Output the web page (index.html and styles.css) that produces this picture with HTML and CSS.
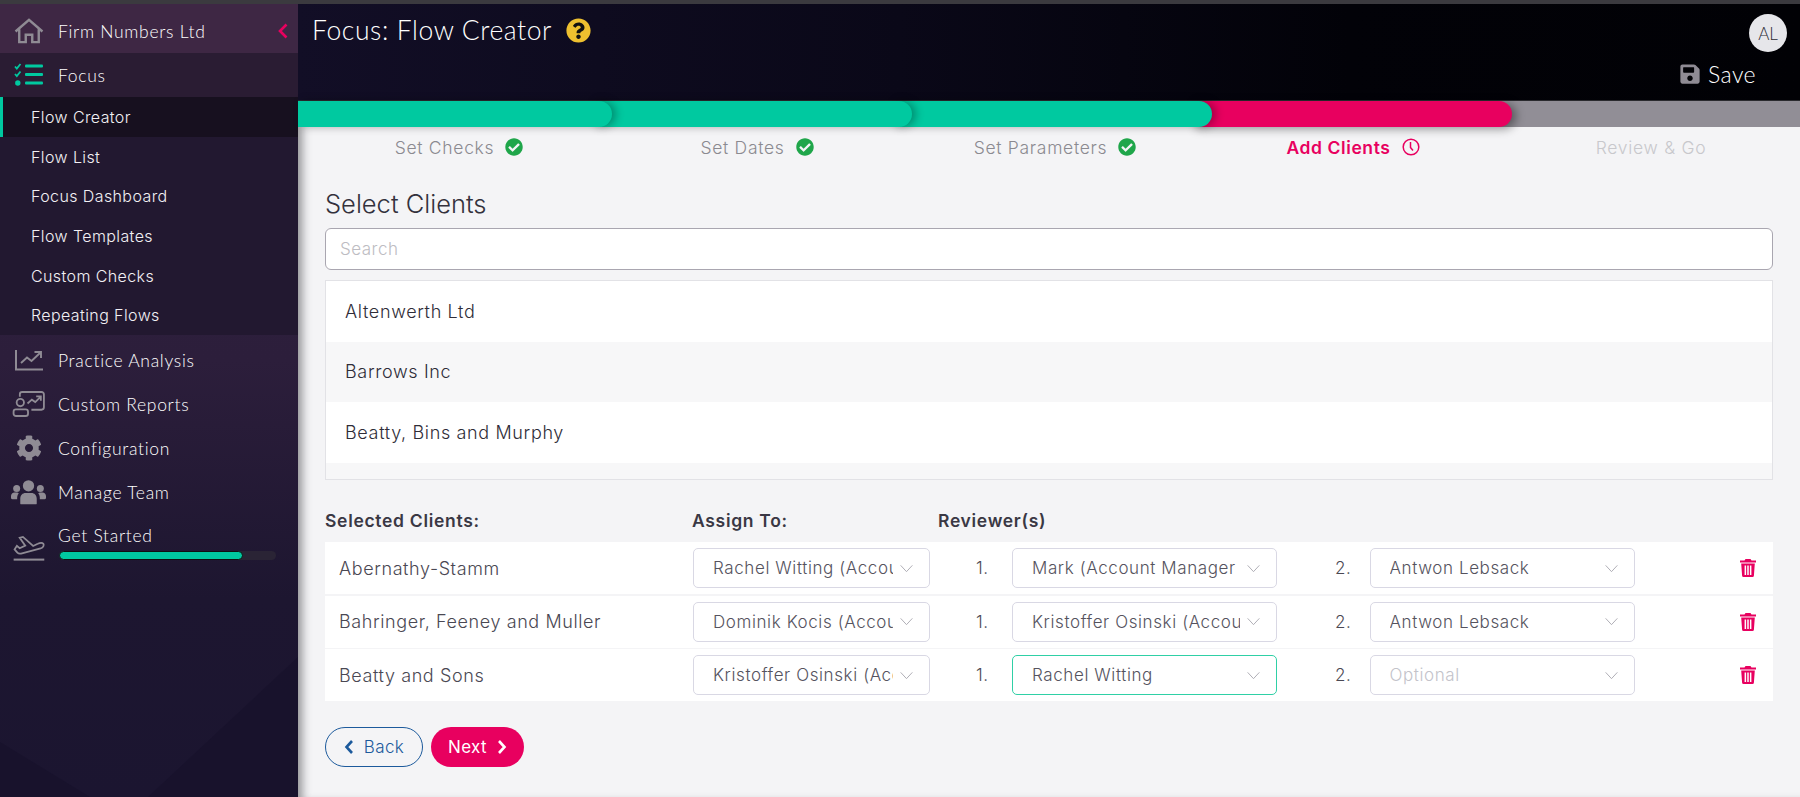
FILE: index.html
```html
<!DOCTYPE html>
<html lang="en">
<head>
    <meta charset="utf-8"/>
    <title>Focus: Flow Creator</title>
    <link rel="stylesheet" href="styles.css">
</head>
<body>
    <svg class="sprite" width="0" height="0">
        <symbol id="i-check" viewBox="0 0 512 512"><path d="M504 256c0 136.967-111.033 248-248 248S8 392.967 8 256 119.033 8 256 8s248 111.033 248 248zM227.314 387.314l184-184c6.248-6.248 6.248-16.379 0-22.627l-22.627-22.627c-6.248-6.249-16.379-6.249-22.628 0L216 308.118l-70.059-70.059c-6.248-6.248-16.379-6.248-22.628 0l-22.627 22.627c-6.248 6.248-6.248 16.379 0 22.627l104 104c6.249 6.249 16.379 6.249 22.628.001z"/></symbol>
        <symbol id="i-chev" viewBox="0 0 16 10"><path d="M1.500 1.500 8 8.500l6.500-7" fill="none" stroke="currentColor" stroke-width="1"/></symbol>
        <symbol id="i-trash" viewBox="0 0 16 18"><path d="M5.500 0h5l1 1.500H16v2H0v-2h4.500zM1.200 4.500h13.600l-.9 12.200a1.400 1.400 0 0 1-1.400 1.300H3.500a1.400 1.400 0 0 1-1.400-1.300zM4.600 6.500v9.500h1.500V6.500zm2.650 0v9.500h1.500V6.500zm2.650 0v9.500h1.500V6.500z" fill-rule="evenodd"/></symbol>
    </svg>

    <div class="topstrip"></div>
    <div class="shell">
        <nav class="sidebar">
            <svg class="side-bg" viewBox="0 0 298 140" preserveAspectRatio="none"><path d="M298 0v140H148zM0 85l90 55H0z" fill="#15102a" opacity=".55"/></svg>

            <div class="firm">
                <svg class="nav-icon" viewBox="0 0 32 28" fill="none" stroke="#8f8b94" stroke-width="2.600"><path d="M1.500 14.500 16 2l14.500 12.500M5.500 12v14h7v-8h7v8h7V12"/></svg>
                <span class="nav-text">Firm Numbers Ltd</span>
                <svg class="collapse" viewBox="0 0 10 16"><path d="M8.500 1.500 2 8l6.500 6.500" fill="none" stroke="#e8005f" stroke-width="2.600"/></svg>
            </div>
            <div class="focus-head">
                <svg class="nav-icon" viewBox="0 0 30 24" fill="#00c9a0"><path d="M1 3.500 2.800 5.500 6.500 1" fill="none" stroke="#00c9a0" stroke-width="1.800"/><path d="M1 11 2.800 13 6.500 8.500" fill="none" stroke="#00c9a0" stroke-width="1.800"/><circle cx="3.800" cy="20" r="2.700"/><rect x="11" y="1.500" width="18" height="3" rx="1"/><rect x="11" y="10" width="18" height="3" rx="1"/><rect x="11" y="18.500" width="18" height="3" rx="1"/></svg>
                <span class="nav-text">Focus</span>
            </div>
            <ul class="submenu">
                <li class="sub-item active">Flow Creator</li>
                <li class="sub-item">Flow List</li>
                <li class="sub-item">Focus Dashboard</li>
                <li class="sub-item">Flow Templates</li>
                <li class="sub-item">Custom Checks</li>
                <li class="sub-item">Repeating Flows</li>
            </ul>
            <div class="nav-row">
                <svg class="nav-icon" viewBox="0 0 30 24" fill="none" stroke="#8f8b94" stroke-width="2"><path d="M2 2v19.500h27"/><path d="M7 15l6-5.500 4.500 3.500L26 5M20.500 4H27v6" stroke-width="1.900"/></svg>
                <span class="nav-text">Practice Analysis</span>
            </div>
            <div class="nav-row">
                <svg class="nav-icon wide" viewBox="0 0 34 27" fill="none" stroke="#8f8b94" stroke-width="1.900"><path d="M8 6V3.500A2.500 2.500 0 0 1 10.500 1H30.500A2.500 2.500 0 0 1 33 3.500V17a2.500 2.500 0 0 1-2.500 2.500H20"/><circle cx="8.500" cy="12" r="3.800"/><rect x="1.500" y="19" width="15" height="7" rx="2.500"/><path d="M16 13l4.500-4 3.500 2.500L29.500 6M25 5.500h4.800v4.500"/></svg>
                <span class="nav-text">Custom Reports</span>
            </div>
            <div class="nav-row">
                <svg class="nav-icon" viewBox="0 0 512 512" fill="#8f8b94"><path d="M487.4 315.7l-42.6-24.6c4.3-23.2 4.3-47 0-70.2l42.6-24.6c4.9-2.8 7.1-8.6 5.500-14-11.100-35.600-30-67.800-54.700-94.600-3.800-4.100-10-5.100-14.800-2.300L380.800 110c-17.900-15.400-38.500-27.300-60.800-35.100V25.800c0-5.600-3.900-10.500-9.400-11.700-36.700-8.200-74.300-7.800-109.200 0-5.500 1.200-9.400 6.100-9.400 11.700V75c-22.200 7.900-42.800 19.800-60.800 35.100L88.700 85.500c-4.900-2.800-11-1.900-14.800 2.300-24.700 26.700-43.600 58.900-54.700 94.600-1.700 5.400.6 11.200 5.500 14L67.300 221c-4.300 23.200-4.300 47 0 70.200l-42.600 24.600c-4.900 2.800-7.100 8.600-5.500 14 11.100 35.600 30 67.800 54.700 94.600 3.800 4.100 10 5.100 14.800 2.300l42.600-24.600c17.900 15.400 38.500 27.300 60.800 35.100v49.200c0 5.600 3.900 10.500 9.400 11.700 36.700 8.200 74.300 7.800 109.200 0 5.500-1.200 9.400-6.100 9.400-11.700v-49.200c22.200-7.900 42.800-19.800 60.800-35.100l42.600 24.600c4.900 2.800 11 1.900 14.800-2.300 24.700-26.700 43.600-58.900 54.700-94.600 1.500-5.500-.7-11.300-5.600-14.100zM256 336c-44.100 0-80-35.900-80-80s35.900-80 80-80 80 35.900 80 80-35.900 80-80 80z"/></svg>
                <span class="nav-text">Configuration</span>
            </div>
            <div class="nav-row">
                <svg class="nav-icon wide" viewBox="0 0 34 24" fill="#8f8b94"><circle cx="17" cy="6" r="5.500"/><circle cx="5.500" cy="8.500" r="3.400"/><circle cx="28.500" cy="8.500" r="3.400"/><path d="M9 23.500v-5c0-3.500 2.500-5.500 5-5.500h6c2.500 0 5 2 5 5.500v5a1 1 0 0 1-1 .5H10a1 1 0 0 1-1-.5zM7.500 13.500C6 15 6 17 6 19H1.500A1.500 1.500 0 0 1 0 17.500V16c0-2 1.500-3.500 3.500-3.500h2c1 0 1.500.4 2 1zM26.500 13.500C28 15 28 17 28 19h4.500a1.500 1.500 0 0 0 1.500-1.500V16c0-2-1.500-3.500-3.500-3.500h-2c-1 0-1.500.4-2 1z"/></svg>
                <span class="nav-text">Manage Team</span>
            </div>
            <div class="nav-row started">
                <svg class="nav-icon wide" viewBox="0 0 34 28" fill="none" stroke="#8f8b94" stroke-width="1.900"><path d="M1 26.500h33" stroke-width="2.200"/><path d="M2 15.500l3 3.500c1 1 2.500 1.400 4 1l21-5.500c3-1 4-3.500 3-5-1-1.300-3.500-1.300-6 0l-5 2.300L11 2 7.500 3l6 8.500-6 2.700-3-2.500z"/></svg>
                <div class="started-body">
                    <span class="nav-text">Get Started</span>
                    <div class="started-track"><div class="started-fill"></div></div>
                </div>
            </div>
        </nav>

        <main class="main">
            <header class="header">
                <div class="title-wrap">
                    <h1 class="title">Focus: Flow Creator</h1>
                    <svg class="help" viewBox="0 0 512 512"><circle cx="256" cy="256" r="160" fill="#111"/><path fill="#eec02f" d="M504 256c0 136.997-111.043 248-248 248S8 392.997 8 256C8 119.083 119.043 8 256 8s248 111.083 248 248zM262.655 90c-54.497 0-89.255 22.957-116.549 63.758-3.536 5.286-2.353 12.415 2.715 16.258l34.699 26.310c5.205 3.947 12.621 3.008 16.665-2.122 17.864-22.658 30.113-35.797 57.303-35.797 20.429 0 45.698 13.148 45.698 32.958 0 14.976-12.363 22.667-32.534 33.976C247.128 238.528 216 254.941 216 296v4c0 6.627 5.373 12 12 12h56c6.627 0 12-5.373 12-12v-1.333c0-28.462 83.186-29.647 83.186-106.667 0-58.002-60.165-102-116.531-102zM256 338c-25.365 0-46 20.635-46 46 0 25.364 20.635 46 46 46s46-20.636 46-46c0-25.365-20.635-46-46-46z"/></svg>
                </div>
                <div class="header-right">
                    <div class="avatar">AL</div>
                    <div class="save">
                        <svg class="save-icon" viewBox="0 0 448 512" fill="#8f8b94"><path d="M433.900 129.900l-83.900-83.900A48 48 0 0 0 316.100 32H48C21.500 32 0 53.500 0 80v352c0 26.500 21.500 48 48 48h352c26.500 0 48-21.500 48-48V163.900a48 48 0 0 0-14.100-34zM224 416c-35.300 0-64-28.700-64-64 0-35.300 28.700-64 64-64s64 28.700 64 64c0 35.300-28.700 64-64 64zm96-304.500V212c0 6.600-5.400 12-12 12H76c-6.600 0-12-5.400-12-12V108c0-6.600 5.400-12 12-12h228.500c3.200 0 6.200 1.300 8.500 3.500l3.500 3.500c2.200 2.200 3.500 5.300 3.500 8.500z"/></svg>
                        <span>Save</span>
                    </div>
                </div>
            </header>

            <div class="progress">
                <div class="seg seg-1"></div>
                <div class="seg seg-2"></div>
                <div class="seg seg-3"></div>
                <div class="seg seg-4"></div>
            </div>

            <div class="steps">
                <div class="step">Set Checks <svg class="step-icon"><use href="#i-check"/></svg></div>
                <div class="step">Set Dates <svg class="step-icon"><use href="#i-check"/></svg></div>
                <div class="step">Set Parameters <svg class="step-icon"><use href="#i-check"/></svg></div>
                <div class="step current">Add Clients
                    <svg class="step-icon" viewBox="0 0 18 18" fill="none" stroke="#e8005f" stroke-width="1.500"><circle cx="9" cy="9" r="7.800"/><path d="M8.500 4v5.500l2.500 3"/></svg>
                </div>
                <div class="step todo">Review &amp; Go</div>
            </div>

            <section class="content">
                <h2 class="section-title">Select Clients</h2>
                <input class="search" type="text" placeholder="Search">
                <ul class="client-list">
                    <li class="client">Altenwerth Ltd</li>
                    <li class="client">Barrows Inc</li>
                    <li class="client">Beatty, Bins and Murphy</li>
                    <li class="client"></li>
                </ul>

                <div class="table-head">
                    <div class="col-name">Selected Clients:</div>
                    <div class="col-assign">Assign To:</div>
                    <div>Reviewer(s)</div>
                </div>

                <div class="row">
                    <div class="col-name row-name">Abernathy-Stamm</div>
                    <div class="pick pick-assign"><span class="pick-text">Rachel Witting (Accou</span><svg class="chev"><use href="#i-chev"/></svg></div>
                    <div class="num num-1">1.</div>
                    <div class="pick pick-review"><span class="pick-text">Mark (Account Manager 2</span><svg class="chev"><use href="#i-chev"/></svg></div>
                    <div class="num num-2">2.</div>
                    <div class="pick pick-review"><span class="pick-text">Antwon Lebsack</span><svg class="chev"><use href="#i-chev"/></svg></div>
                    <svg class="trash"><use href="#i-trash"/></svg>
                </div>
                <div class="row">
                    <div class="col-name row-name">Bahringer, Feeney and Muller</div>
                    <div class="pick pick-assign"><span class="pick-text">Dominik Kocis (Accou</span><svg class="chev"><use href="#i-chev"/></svg></div>
                    <div class="num num-1">1.</div>
                    <div class="pick pick-review"><span class="pick-text">Kristoffer Osinski (Accour</span><svg class="chev"><use href="#i-chev"/></svg></div>
                    <div class="num num-2">2.</div>
                    <div class="pick pick-review"><span class="pick-text">Antwon Lebsack</span><svg class="chev"><use href="#i-chev"/></svg></div>
                    <svg class="trash"><use href="#i-trash"/></svg>
                </div>
                <div class="row">
                    <div class="col-name row-name">Beatty and Sons</div>
                    <div class="pick pick-assign"><span class="pick-text">Kristoffer Osinski (Acc</span><svg class="chev"><use href="#i-chev"/></svg></div>
                    <div class="num num-1">1.</div>
                    <div class="pick pick-review focused"><span class="pick-text">Rachel Witting</span><svg class="chev"><use href="#i-chev"/></svg></div>
                    <div class="num num-2">2.</div>
                    <div class="pick pick-review empty"><span class="pick-text">Optional</span><svg class="chev"><use href="#i-chev"/></svg></div>
                    <svg class="trash"><use href="#i-trash"/></svg>
                </div>

                <div class="actions">
                    <button class="btn btn-back" type="button">
                        <svg class="btn-chev" viewBox="0 0 10 16"><path d="M8 2 2.500 8 8 14" fill="none" stroke="currentColor" stroke-width="2.600"/></svg>
                        Back
                    </button>
                    <button class="btn btn-next" type="button">
                        Next
                        <svg class="btn-chev" viewBox="0 0 10 16"><path d="M2 2l5.500 6L2 14" fill="none" stroke="currentColor" stroke-width="2.600"/></svg>
                    </button>
                </div>
            </section>
        </main>
    </div>
</body>
</html>
```
FILE: styles.css
```css
* {
    box-sizing: border-box;
}

html, body {
    height: 100%;
}

body {
    margin: 0;
    overflow: hidden;
    display: flex;
    flex-direction: column;
    background: #f4f4f6;
    font-family: "Inter", "Liberation Sans", sans-serif;
    color: #3c3a44;
}

ul {
    margin: 0;
    padding: 0;
    list-style: none;
}

.sprite {
    display: none;
}

.topstrip {
    height: 4px;
    background: #3b3a3f;
    flex: none;
}

.shell {
    flex: 1;
    display: flex;
    min-height: 0;
}

/* sidebar */
.sidebar {
    position: relative;
    width: 298px;
    flex: none;
    background: linear-gradient(to bottom, #312040 0%, #2c1e3b 45%, #1d1630 75%, #1b1530 100%);
    color: #fff;
    font-family: "Lato", "Inter", sans-serif;
    font-weight: 300;
    font-size: 17.500px;
}

.side-bg {
    position: absolute;
    left: 0;
    bottom: 0;
    width: 100%;
    height: 140px;
}

.nav-text {
    letter-spacing: 0.7px;
}

.firm, .focus-head, .nav-row {
    position: relative;
    display: flex;
    align-items: center;
    height: 44px;
}

.firm {
    height: 49px;
    padding-top: 5px;
    background: #3e2744;
}

.focus-head {
    background: #2a1c33;
}

.nav-icon {
    width: 30px;
    height: 26px;
    margin: 0 14px;
    flex: none;
}

.nav-icon.wide {
    width: 35px;
    margin: 0 12px 0 11px;
}

.collapse {
    width: 10px;
    height: 16px;
    margin-left: auto;
    margin-right: 10px;
}

.submenu {
    position: relative;
    background: #221830;
}

.sub-item {
    display: flex;
    align-items: center;
    height: 39.700px;
    padding-left: 31px;
    font-family: "Inter", sans-serif;
    font-weight: 300;
    font-size: 16px;
    letter-spacing: 0.4px;
    color: #f2f0f4;
}

.sub-item.active {
    background: #17101f;
    border-left: 3px solid #00c9a0;
    padding-left: 28px;
}

.submenu + .nav-row {
    margin-top: 3px;
}

.started {
    height: 56px;
    align-items: flex-start;
}

.started .nav-icon {
    margin-top: 21px;
}

.started-body {
    padding-top: 11px;
    flex: 1;
}

.started-track {
    width: 217px;
    height: 9px;
    margin-top: 5px;
    margin-left: 1px;
    border-radius: 5px;
    background: #2a2435;
    overflow: hidden;
}

.started-fill {
    width: 184px;
    height: 100%;
    border-radius: 5px;
    border: 1px solid #111;
    background: #00c9a0;
}

/* main column */
.main {
    flex: 1;
    min-width: 0;
    display: flex;
    flex-direction: column;
    box-shadow: inset 10px 0 10px -6px rgba(60, 60, 65, 0.55);
}

.header {
    display: flex;
    justify-content: space-between;
    height: 97px;
    flex: none;
    border-bottom: 1px solid #2a2a2e;
    background: linear-gradient(to right, #120e26 0%, #0a0818 40%, #020208 70%, #010105 100%);
    color: #fff;
}

.title-wrap {
    display: flex;
    align-items: center;
    gap: 14px;
    height: 52px;
    padding-left: 14px;
}

.title {
    margin: 0;
    font-family: "Lato", "Inter", sans-serif;
    font-weight: 300;
    font-size: 26.500px;
    letter-spacing: 0.6px;
}

.help {
    width: 25px;
    height: 25px;
}

.header-right {
    display: flex;
    flex-direction: column;
    align-items: flex-end;
    padding: 10px 13px 0 0;
}

.avatar {
    display: flex;
    align-items: center;
    justify-content: center;
    width: 38px;
    height: 38px;
    border-radius: 50%;
    background: #e6e6ea;
    color: #2b2a33;
    font-family: "Lato", sans-serif;
    font-weight: 300;
    font-size: 17px;
}

.save {
    display: flex;
    align-items: center;
    gap: 8px;
    margin-top: 8px;
    margin-right: 31px;
    font-family: "Lato", sans-serif;
    font-weight: 300;
    font-size: 23px;
    letter-spacing: 0.4px;
}

.save-icon {
    width: 20px;
    height: 22px;
}

.progress {
    display: flex;
    height: 26px;
    flex: none;
    background: #918e96;
}

.seg {
    position: relative;
    border-radius: 0 13px 13px 0;
}

.seg-1 {
    width: 314px;
    background: #00c9a0;
    z-index: 4;
    box-shadow: 4px 0 8px rgba(0, 0, 0, 0.3);
}

.seg-2 {
    width: 320px;
    margin-left: -20px;
    background: #00c9a0;
    z-index: 3;
    box-shadow: 4px 0 8px rgba(0, 0, 0, 0.3);
}

.seg-3 {
    width: 320px;
    margin-left: -20px;
    background: #00c9a0;
    z-index: 2;
    box-shadow: 4px 0 8px rgba(0, 0, 0, 0.3);
}

.seg-4 {
    width: 320px;
    margin-left: -20px;
    background: #e8005f;
    z-index: 1;
    box-shadow: 4px 2px 10px rgba(0, 0, 0, 0.4);
}

.steps {
    display: flex;
    height: 40px;
    flex: none;
    padding-left: 12px;
}

.step {
    flex: 1;
    display: flex;
    align-items: center;
    justify-content: center;
    gap: 11px;
    color: #8b8a90;
    font-size: 17.500px;
    font-weight: 300;
    letter-spacing: 0.7px;
}

.step.current {
    color: #e8005f;
    font-weight: 600;
    letter-spacing: 0.6px;
}

.step.todo {
    color: #c8c8cc;
}

.step-icon {
    width: 18px;
    height: 18px;
    fill: #1fa64a;
}

.step.current .step-icon {
    fill: none;
}

.content {
    flex: 1;
    padding: 22px 27px 0 27px;
}

.section-title {
    margin: 0 0 9px;
    font-size: 25.500px;
    line-height: 30px;
    font-weight: 300;
    color: #33313c;
}

.search {
    display: block;
    width: 100%;
    height: 42px;
    padding: 0 14px;
    border: 1px solid #a9a6b0;
    border-radius: 6px;
    background: #fff;
    font: 300 17px "Inter", sans-serif;
    letter-spacing: 0.5px;
    outline: none;
}

.search::placeholder {
    color: #bdbcc2;
}

.client-list {
    height: 200px;
    margin-top: 10px;
    border: 1px solid #e2e2e6;
    overflow: hidden;
}

.client {
    display: flex;
    align-items: center;
    height: 60.500px;
    padding-left: 19px;
    background: #fff;
    font-size: 18px;
    font-weight: 300;
    letter-spacing: 0.65px;
    color: #2f2d38;
}

.client:nth-child(even) {
    background: #f7f7f8;
}

.table-head {
    display: flex;
    align-items: center;
    height: 24px;
    margin: 28px 0 10px;
    font-size: 17.500px;
    font-weight: 600;
    letter-spacing: 0.7px;
    color: #3a3844;
}

.col-name {
    width: 367px;
    flex: none;
}

.col-assign {
    width: 246px;
    flex: none;
}

.row {
    display: flex;
    align-items: center;
    height: 52px;
    margin-bottom: 1.500px;
    background: #fff;
    color: #4a4853;
    font-size: 18px;
    font-weight: 300;
    letter-spacing: 0.6px;
}

.row-name {
    padding-left: 14px;
}

.pick {
    display: flex;
    align-items: center;
    flex: none;
    height: 40px;
    padding: 0 15px 0 19px;
    border: 1px solid #d9d8e4;
    border-radius: 5px;
    background: #fff;
    font-size: 17px;
    color: #55535e;
}

.pick-text {
    flex: 1;
    min-width: 0;
    overflow: hidden;
    white-space: nowrap;
}

.pick-assign {
    width: 237px;
    margin-left: 1px;
}

.pick-review {
    width: 265px;
}

.pick.focused {
    border-color: #2fd0a6;
}

.pick.empty {
    color: #c3c3ca;
}

.chev {
    width: 15px;
    height: 9px;
    margin-left: 6px;
    flex: none;
    color: #a7a6ae;
}

.num {
    flex: none;
    font-size: 17px;
}

.num-1 {
    width: 82px;
    padding-left: 46px;
}

.num-2 {
    width: 92.500px;
    padding-left: 58px;
}

.trash {
    width: 16px;
    height: 18px;
    margin-left: 105px;
    fill: #e8005f;
}

.actions {
    display: flex;
    gap: 8px;
    margin-top: 26px;
}

.btn {
    display: flex;
    align-items: center;
    justify-content: center;
    gap: 10px;
    height: 40px;
    border-radius: 20px;
    font: 300 17px "Inter", sans-serif;
    letter-spacing: 0.4px;
}

.btn-chev {
    width: 10px;
    height: 16px;
}

.btn-back {
    width: 98px;
    border: 1px solid #1c5a9c;
    background: transparent;
    color: #1c5a9c;
}

.btn-next {
    width: 93px;
    border: none;
    background: #e8005f;
    color: #fff;
    font-weight: 400;
}
```
